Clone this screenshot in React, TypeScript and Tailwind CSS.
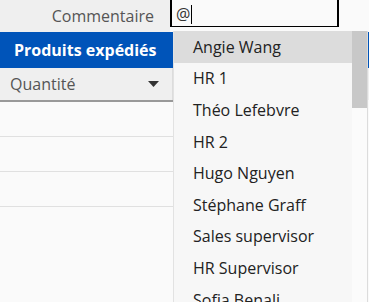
import React from 'react';

const people = [
    'Angie Wang',
    'HR 1',
    'Théo Lefebvre',
    'HR 2',
    'Hugo Nguyen',
    'Stéphane Graff',
    'Sales supervisor',
    'HR Supervisor',
    'Sofia Benali',
];

const App: React.FC = () => {
    return (
        <div className="relative w-[369px] h-[302px] overflow-hidden bg-[#fafafa] text-[16px] font-['Open_Sans',sans-serif]">
            {/* Comment row */}
            <div className="flex h-[32px]">
                <div className="w-[170px] bg-[#efefef] flex items-center justify-end pr-[16px] text-[#555]">
                    Commentaire
                </div>
                <div className="w-[169px] h-[31px] -mt-[4px] pt-[4px] border-2 border-b border-black bg-[#fafafa] flex items-center pl-[4px] text-[#333]">
                    @<span className="ml-[1px] w-px h-[19px] bg-black" />
                </div>
            </div>

            {/* Tables */}
            <div className="flex">
                <div className="w-[174px] border-r border-[#dcdcdc]">
                    <div className="h-[36px] bg-[#0054b9] flex items-center pl-[14px] text-white font-bold">
                        Produits expédiés
                    </div>
                    <div className="h-[32px] bg-[#efefef] flex items-center justify-between pl-[10px] pr-[13px] text-[#555] border-r border-[#dcdcdc]">
                        <span>Quantité</span>
                        <svg width="11" height="6" viewBox="0 0 11 6"><path d="M0 0h11L5.5 6z" fill="#333" /></svg>
                    </div>
                    <div className="h-[2px] bg-[#999]" />
                    <div className="h-[35px] border-b border-[#e0e0e0]" />
                    <div className="h-[35px] border-b border-[#e0e0e0]" />
                    <div className="h-[35px] border-b border-[#e0e0e0]" />
                </div>
                <div className="flex-1">
                    <div className="h-[36px] bg-[#0054b9]" />
                    <div className="h-[32px] bg-[#efefef]" />
                </div>
            </div>

            {/* Mention dropdown */}
            <div className="absolute left-[173px] top-[31px] w-[194px] h-[290px] bg-[#f7f7f7] border-l border-[#e2e2e2] flex">
                <div className="flex-1">
                    {people.map((name, i) => (
                        <div
                            key={name}
                            className={`h-[31.6px] flex items-center pl-[19px] text-[#222] ${i === 0 ? 'bg-[#dcdcdc]' : ''}`}
                        >
                            {name}
                        </div>
                    ))}
                </div>
                <div className="w-[15px] bg-[#fbfbfb]">
                    <div className="h-[77px] bg-[#c8c8c8]" />
                </div>
            </div>
            <div className="absolute left-[367px] top-[31px] w-px h-[271px] bg-[#dcdcdc]" />
        </div>
    );
};

export default App;
